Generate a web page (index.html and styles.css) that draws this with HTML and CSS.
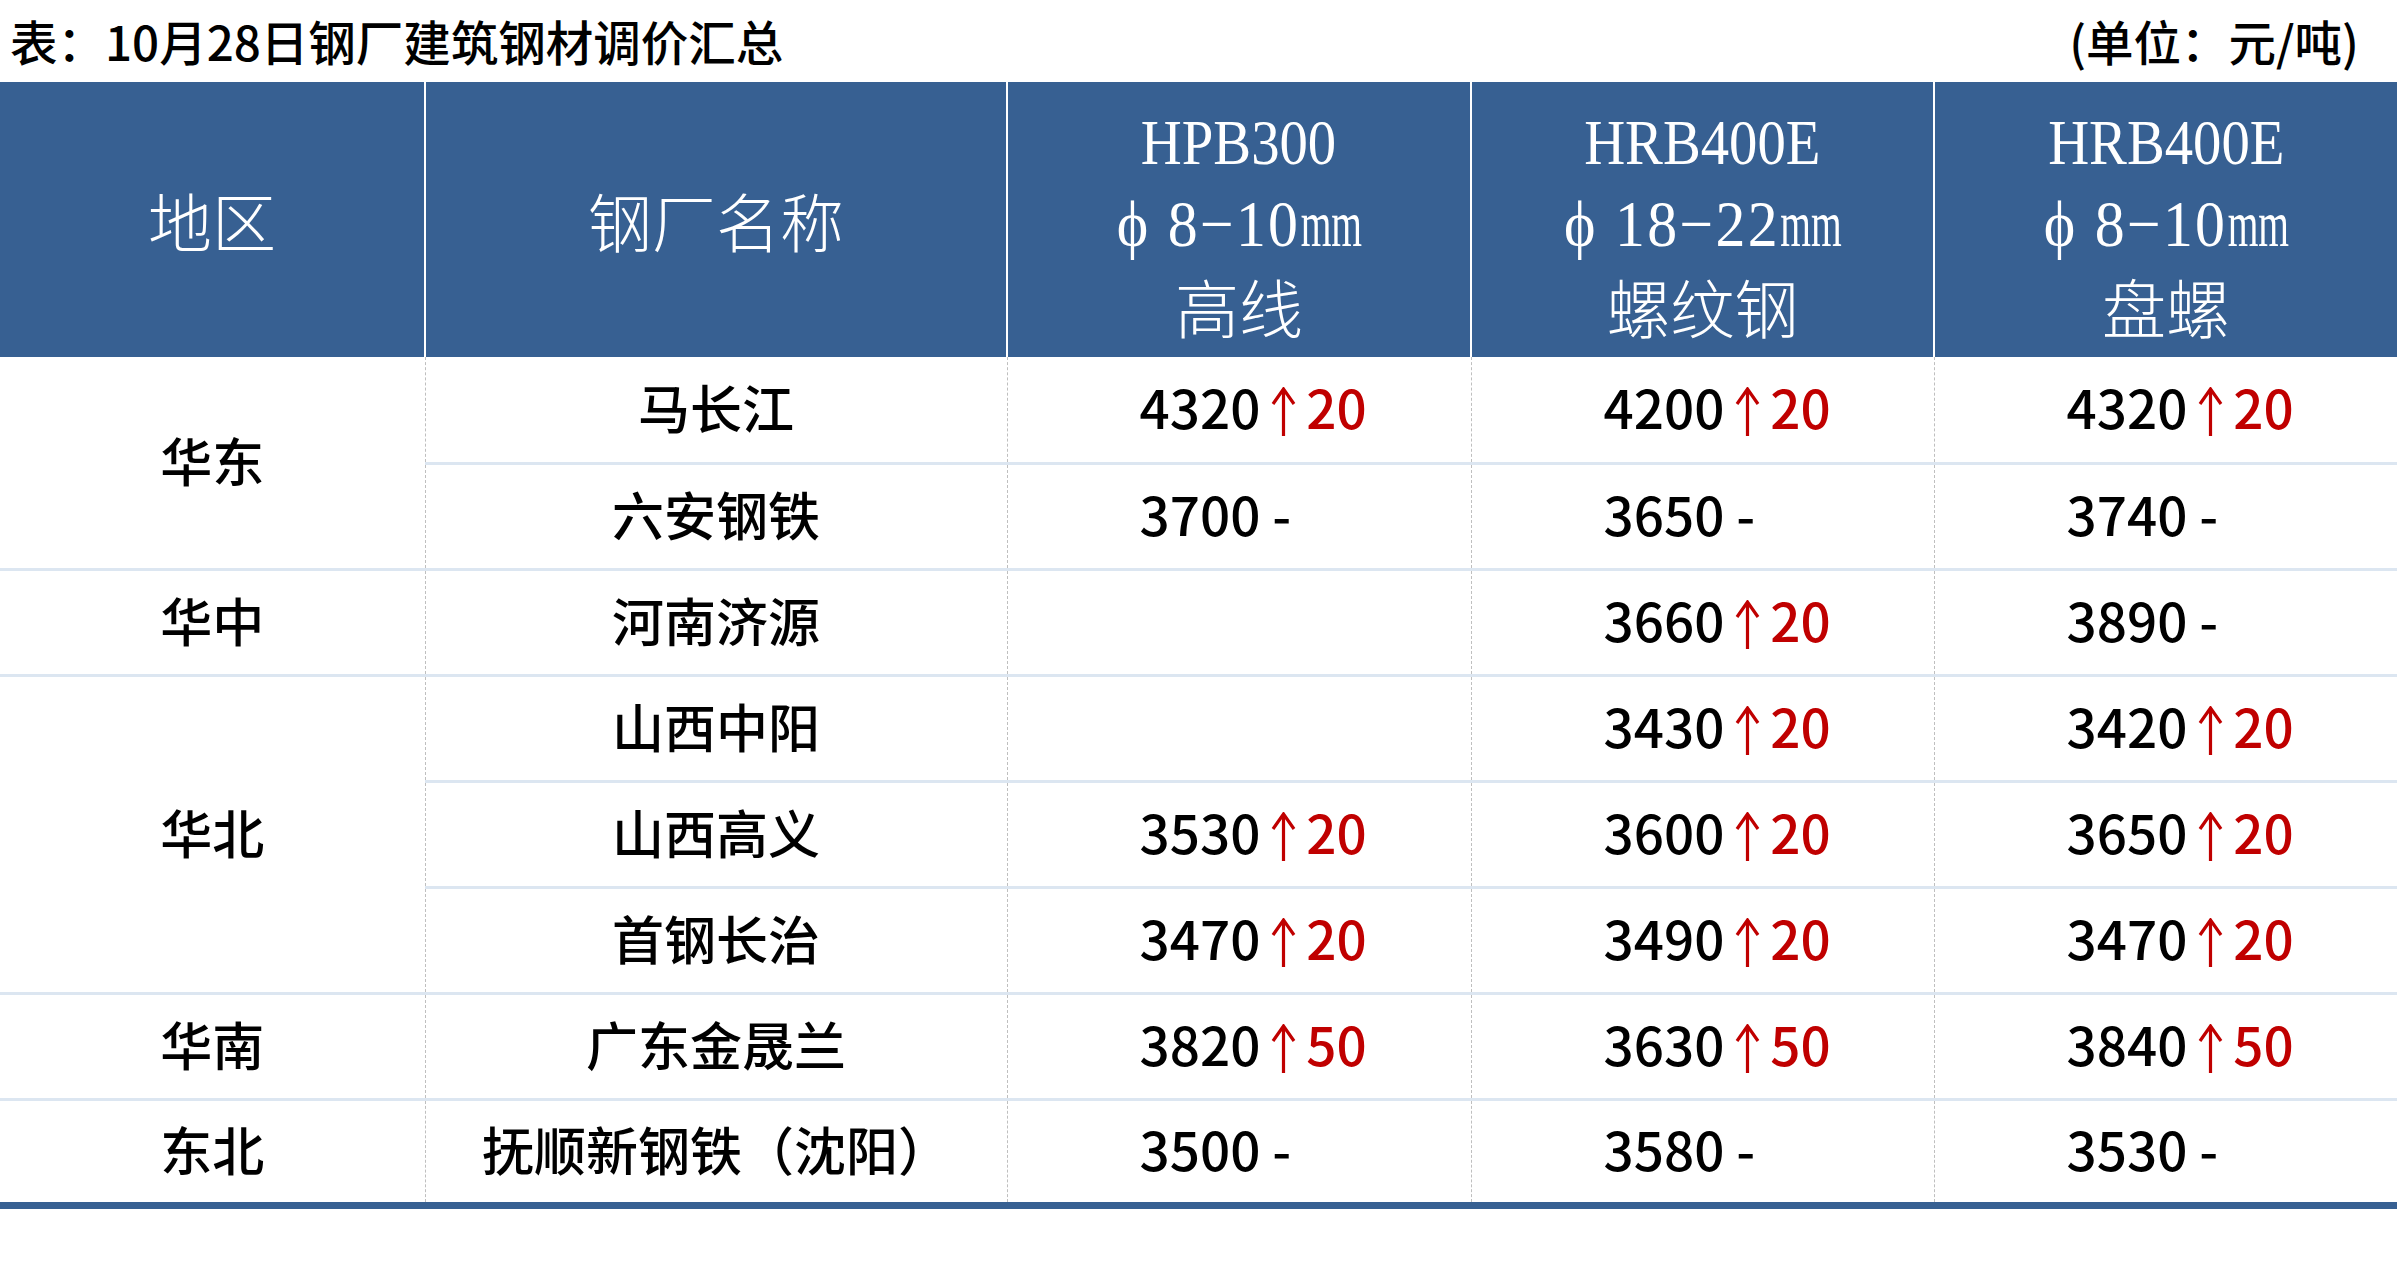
FILE: index.html
```html
<!DOCTYPE html>
<html lang="zh-CN">
<head>
<meta charset="utf-8">
<title>10月28日钢厂建筑钢材调价汇总</title>
<link rel="stylesheet" href="styles.css">
</head>
<body>
<div class="page">
  <div class="titlebar">
    <span class="title">表：10月28日钢厂建筑钢材调价汇总</span>
    <span class="unit">(单位：元/吨)</span>
  </div>
  <table class="price">
    <colgroup>
      <col class="c1"><col class="c2"><col class="c3"><col class="c4"><col class="c5">
    </colgroup>
    <thead>
      <tr>
        <th class="single"><span class="hz">地区</span></th>
        <th class="single"><span class="hz">钢厂名称</span></th>
        <th><span class="ln"><span class="lat">HPB300</span></span><span class="ln"><span class="lat spec">ϕ 8−10<span class="mm">mm</span></span></span><span class="ln hz">高线</span></th>
        <th><span class="ln"><span class="lat">HRB400E</span></span><span class="ln"><span class="lat spec">ϕ 18−22<span class="mm">mm</span></span></span><span class="ln hz">螺纹钢</span></th>
        <th><span class="ln"><span class="lat">HRB400E</span></span><span class="ln"><span class="lat spec">ϕ 8−10<span class="mm">mm</span></span></span><span class="ln hz">盘螺</span></th>
      </tr>
    </thead>
    <tbody>
      <tr class="first">
        <td rowspan="2" class="region">华东</td>
        <td class="mill">马长江</td>
        <td class="num">4320<span class="up"><svg class="arr" viewBox="0 0 25 49"><path d="M12.5 3 V49 M2 17 L12.5 2 L23 17"/></svg>20</span></td>
        <td class="num">4200<span class="up"><svg class="arr" viewBox="0 0 25 49"><path d="M12.5 3 V49 M2 17 L12.5 2 L23 17"/></svg>20</span></td>
        <td class="num">4320<span class="up"><svg class="arr" viewBox="0 0 25 49"><path d="M12.5 3 V49 M2 17 L12.5 2 L23 17"/></svg>20</span></td>
      </tr>
      <tr>
        <td class="mill">六安钢铁</td>
        <td class="num">3700 -</td>
        <td class="num">3650 -</td>
        <td class="num">3740 -</td>
      </tr>
      <tr>
        <td class="region">华中</td>
        <td class="mill">河南济源</td>
        <td class="num"></td>
        <td class="num">3660<span class="up"><svg class="arr" viewBox="0 0 25 49"><path d="M12.5 3 V49 M2 17 L12.5 2 L23 17"/></svg>20</span></td>
        <td class="num">3890 -</td>
      </tr>
      <tr>
        <td rowspan="3" class="region">华北</td>
        <td class="mill">山西中阳</td>
        <td class="num"></td>
        <td class="num">3430<span class="up"><svg class="arr" viewBox="0 0 25 49"><path d="M12.5 3 V49 M2 17 L12.5 2 L23 17"/></svg>20</span></td>
        <td class="num">3420<span class="up"><svg class="arr" viewBox="0 0 25 49"><path d="M12.5 3 V49 M2 17 L12.5 2 L23 17"/></svg>20</span></td>
      </tr>
      <tr>
        <td class="mill">山西高义</td>
        <td class="num">3530<span class="up"><svg class="arr" viewBox="0 0 25 49"><path d="M12.5 3 V49 M2 17 L12.5 2 L23 17"/></svg>20</span></td>
        <td class="num">3600<span class="up"><svg class="arr" viewBox="0 0 25 49"><path d="M12.5 3 V49 M2 17 L12.5 2 L23 17"/></svg>20</span></td>
        <td class="num">3650<span class="up"><svg class="arr" viewBox="0 0 25 49"><path d="M12.5 3 V49 M2 17 L12.5 2 L23 17"/></svg>20</span></td>
      </tr>
      <tr>
        <td class="mill">首钢长治</td>
        <td class="num">3470<span class="up"><svg class="arr" viewBox="0 0 25 49"><path d="M12.5 3 V49 M2 17 L12.5 2 L23 17"/></svg>20</span></td>
        <td class="num">3490<span class="up"><svg class="arr" viewBox="0 0 25 49"><path d="M12.5 3 V49 M2 17 L12.5 2 L23 17"/></svg>20</span></td>
        <td class="num">3470<span class="up"><svg class="arr" viewBox="0 0 25 49"><path d="M12.5 3 V49 M2 17 L12.5 2 L23 17"/></svg>20</span></td>
      </tr>
      <tr>
        <td class="region">华南</td>
        <td class="mill">广东金晟兰</td>
        <td class="num">3820<span class="up"><svg class="arr" viewBox="0 0 25 49"><path d="M12.5 3 V49 M2 17 L12.5 2 L23 17"/></svg>50</span></td>
        <td class="num">3630<span class="up"><svg class="arr" viewBox="0 0 25 49"><path d="M12.5 3 V49 M2 17 L12.5 2 L23 17"/></svg>50</span></td>
        <td class="num">3840<span class="up"><svg class="arr" viewBox="0 0 25 49"><path d="M12.5 3 V49 M2 17 L12.5 2 L23 17"/></svg>50</span></td>
      </tr>
      <tr class="last">
        <td class="region">东北</td>
        <td class="mill">抚顺新钢铁（沈阳）</td>
        <td class="num">3500 -</td>
        <td class="num">3580 -</td>
        <td class="num">3530 -</td>
      </tr>
    </tbody>
  </table>
</div>
</body>
</html>
```

FILE: styles.css
```css
html, body {
  margin: 0;
  padding: 0;
  background: #ffffff;
}

.page {
  width: 2397px;
  font-family: "Noto Sans CJK SC", "Noto Sans", sans-serif;
  color: #000000;
}

.titlebar {
  height: 82px;
  display: flex;
  justify-content: space-between;
  align-items: center;
  padding: 0 38px 0 10px;
  box-sizing: border-box;
}

.title, .unit {
  font-size: 47.5px;
  font-weight: 500;
  line-height: 1;
}

.price {
  width: 2397px;
  table-layout: fixed;
  border-collapse: collapse;
  border-spacing: 0;
}

.c1 { width: 425px; }
.c2 { width: 582px; }
.c3 { width: 464px; }
.c4 { width: 463px; }
.c5 { width: 463px; }

.price th {
  height: 275px;
  padding: 10px 0 0 0;
  background: #376092;
  color: #ffffff;
  font-weight: 400;
  text-align: center;
  vertical-align: middle;
  border-left: 2px solid #ffffff;
  box-sizing: border-box;
}

.price th.single {
  padding: 0;
}

.price th:first-child {
  border-left: none;
}

.hz {
  font-family: "Noto Sans CJK SC", sans-serif;
  font-weight: 300;
  font-size: 64px;
  line-height: 81px;
}

.ln {
  display: block;
  height: 81px;
  line-height: 81px;
}

.lat {
  display: inline-block;
  font-family: "Liberation Serif", "Times New Roman", serif;
  font-size: 63px;
  line-height: 81px;
  transform: scaleX(0.9);
}

.lat.spec {
  font-size: 65px;
  letter-spacing: 2.5px;
  transform: scaleX(0.92);
}

.mm {
  display: inline-block;
  letter-spacing: 0;
  transform: scaleX(0.66);
  transform-origin: left center;
  margin-right: -34px;
}

.price td {
  height: 106px;
  padding: 0 0 6px 0;
  border-top: 3px solid #dce6f1;
  border-left: 1px dashed #bfbfbf;
  vertical-align: middle;
  box-sizing: border-box;
}

.price tr.first td {
  border-top: none;
}

.price tr.last td {
  border-bottom: 7px solid #376092;
}

.price td.region {
  border-left: none;
  text-align: center;
  font-size: 52px;
  font-weight: 500;
}

.price td.mill {
  text-align: center;
  font-size: 52px;
  font-weight: 500;
}

.price td.num {
  text-align: left;
  padding-left: 132px;
  font-size: 53px;
  font-weight: 500;
  white-space: nowrap;
}

.up {
  color: #c00000;
}

.arr {
  width: 25px;
  height: 49px;
  margin: 0 10px 0 11px;
  vertical-align: -7px;
  fill: none;
  stroke: #c00000;
  stroke-width: 3.2;
}
```
